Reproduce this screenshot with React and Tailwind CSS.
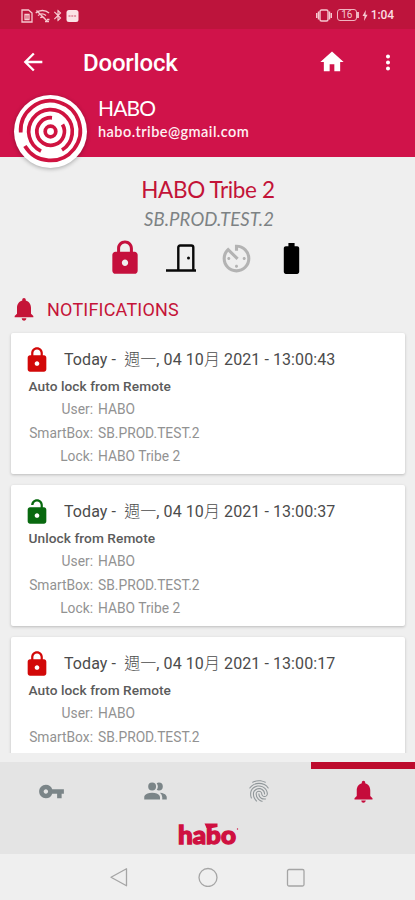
import {
  MdArrowBack,
  MdAvTimer,
  MdBatteryFull,
  MdBluetooth,
  MdFingerprint,
  MdHome,
  MdLock,
  MdMoreVert,
  MdNotifications,
  MdVpnKey,
} from 'react-icons/md';

const notifications = [
  {
    id: 1,
    locked: true,
    time: '13:00:43',
    title: 'Auto lock from Remote',
    details: [['User', 'HABO'], ['SmartBox', 'SB.PROD.TEST.2'], ['Lock', 'HABO Tribe 2']],
  },
  {
    id: 2,
    locked: false,
    time: '13:00:37',
    title: 'Unlock from Remote',
    details: [['User', 'HABO'], ['SmartBox', 'SB.PROD.TEST.2'], ['Lock', 'HABO Tribe 2']],
  },
  {
    id: 3,
    locked: true,
    time: '13:00:17',
    title: 'Auto lock from Remote',
    details: [['User', 'HABO'], ['SmartBox', 'SB.PROD.TEST.2']],
  },
];

function StatusBar() {
  return (
    <div className="flex h-[29px] items-center justify-between bg-[#bd143c] pr-[21px] pl-[21px] text-[#f6c9d0]">
      <div className="flex items-center gap-[2px] pt-[2px]">
        <svg width="12" height="14" viewBox="0 0 12 14" fill="none" stroke="currentColor" strokeWidth="1.3">
          <path d="M1 1h6.5L11 4v9H1zM4 5.5h4v5H4zM6 5v6" />
        </svg>
        <svg width="15" height="14" viewBox="0 0 15 14" fill="none" stroke="currentColor" strokeWidth="1.4">
          <path d="M.7 4c4-3.4 9.4-3.4 13.4 0M3 6.5c2.5-2 5.5-2 8 0M5.3 8.8c1.2-.9 2.8-.9 4 0M1.5 1.5l11 11" />
          <path d="M10 12.5h4M12 10.5h2.5" />
        </svg>
        <MdBluetooth className="-mx-[1px] h-[15px] w-[14px]" />
        <svg width="13" height="14" viewBox="0 0 13 14">
          <rect x=".5" y="1" width="12" height="12" rx="2.5" fill="#fbe3e6" />
          <path d="M2.5 7h8" stroke="#dd7f92" strokeWidth="1.3" strokeDasharray="2 .8" />
        </svg>
      </div>
      <div className="flex items-center pt-px">
        <svg width="16" height="13" viewBox="0 0 16 13" fill="none" stroke="currentColor" strokeWidth="1.4">
          <rect x="4" y="1" width="8" height="11" rx="1.5" />
          <path d="M2.5 2.5v8M13.5 2.5v8M.7 4v5M15.3 4v5" />
        </svg>
        <div className="ml-[5px] flex h-[12px] w-[20px] items-center justify-center rounded-[3px] border border-[#f0b5c0] font-[Roboto] text-[10px] leading-none">
          16
        </div>
        <div className="h-[6px] w-[2px] bg-[#f0b5c0]" />
        <svg className="ml-[3px]" width="6" height="11" viewBox="0 0 6 11" fill="currentColor">
          <path d="M3.8 0L.5 6h2L2 11l3.6-6.2H3.5z" />
        </svg>
        <span className="ml-[3px] font-[Roboto] text-[12px] font-medium tracking-[-0.1px] text-[#fbdde2]">1:04</span>
      </div>
    </div>
  );
}

function Avatar() {
  return (
    <div className="h-[73px] w-[73px] rounded-full bg-white shadow-[0_1px_4px_rgba(0,0,0,0.3)]">
      <svg width="73" height="73" viewBox="-36.5 -36.5 73 73" fill="none" stroke="#cf1340" strokeWidth="3.7">
        <circle r="5.3" />
        <path d="M1.5 -13.7A13.8 13.8 0 1 0 12 -7" />
        <path d="M11.5 18.5A21.8 21.8 0 1 0 -9.5 19.6" />
        <path d="M-29.8 1A29.8 29.8 0 1 1 -25.6 14.5" />
      </svg>
    </div>
  );
}

function Header() {
  return (
    <header className="h-[128px] bg-[#d0134a] text-white">
      <div className="flex h-[66px] items-center pr-[15px] pl-[19px]">
        <MdArrowBack className="h-[28px] w-[28px]" />
        <h1 className="ml-[36px] flex-1 pt-px font-[Roboto] text-[24px] font-medium tracking-[-0.2px]">Doorlock</h1>
        <MdHome className="mr-[30px] h-[28px] w-[28px]" />
        <MdMoreVert className="h-[29px] w-[24px]" />
      </div>
      <div className="flex pl-[14px]">
        <Avatar />
        <div className="ml-[11px] font-[Lato]">
          <p className="text-[21px] leading-[26px] tracking-[-0.9px]">HABO</p>
          <p className="text-[14.5px] leading-[22px] font-semibold tracking-[0.45px] text-[#fff0f2]">
            habo.tribe@gmail.com
          </p>
        </div>
      </div>
    </header>
  );
}

function DoorIcon() {
  return (
    <svg width="32" height="32" viewBox="0 0 32 32" fill="none" stroke="#080808" strokeWidth="2.4">
      <path d="M1 28.5h30M13.3 28V5.5q0-2 2-2h11q2 0 2 2V28" />
      <circle cx="23.5" cy="16" r="1.5" fill="#080808" stroke="none" />
    </svg>
  );
}

function LockOpenIcon({ className }) {
  return (
    <svg viewBox="0 0 24 24" fill="currentColor" className={className}>
      <path d="M18 8h-1V6c0-2.76-2.24-5-5-5S7 3.24 7 6h2c0-1.7 1.3-3.1 3-3.1s3.1 1.4 3.1 3.1v2H6c-1.1 0-2 .9-2 2v10c0 1.1.9 2 2 2h12c1.1 0 2-.9 2-2V10c0-1.1-.9-2-2-2zm-6 9c-1.1 0-2-.9-2-2s.9-2 2-2 2 .9 2 2-.9 2-2 2z" />
    </svg>
  );
}

function UsersIcon({ className }) {
  return (
    <svg viewBox="0 0 24 24" fill="currentColor" className={className}>
      <path d="M16 17v2H2v-2s0-4 7-4 7 4 7 4m-3.5-9.5A3.5 3.5 0 1 0 9 11a3.5 3.5 0 0 0 3.5-3.5m3.44 5.5A5.32 5.32 0 0 1 18 17v2h4v-2s0-3.63-6.06-4M15 4a3.39 3.39 0 0 0-1.93.59 5 5 0 0 1 0 5.82A3.39 3.39 0 0 0 15 11a3.5 3.5 0 0 0 0-7z" />
    </svg>
  );
}

function DeviceSummary() {
  return (
    <section className="flex flex-col items-center pt-[19px]">
      <h2 className="ml-px font-[Lato] text-[22.5px] leading-[28px] tracking-[-0.35px] text-[#c31338]">HABO Tribe 2</h2>
      <p className="mt-[3px] ml-[3px] font-[Lato] text-[18.5px] leading-[24px] tracking-[0.1px] text-[#7d8284] italic">
        SB.PROD.TEST.2
      </p>
      <div className="mt-[8px] ml-[2px] grid w-[222px] grid-cols-4 place-items-center">
        <MdLock className="h-[38px] w-[38px] text-[#c5103d]" />
        <DoorIcon />
        <MdAvTimer className="h-[37px] w-[37px] text-[#b3b3b3]" />
        <MdBatteryFull className="h-[37px] w-[37px] text-black" />
      </div>
    </section>
  );
}

function DetailRow({ label, value }) {
  return (
    <div className="flex h-[23.5px] items-center text-[13.8px] text-[#929292]">
      <span className="w-[82px] text-right">{label}:</span>
      <span className="ml-[5px]">{value}</span>
    </div>
  );
}

function NotificationCard({ notification }) {
  return (
    <article className="h-[141px] shrink-0 rounded-[2px] bg-white pt-[12px] font-[Roboto,'Noto_Sans_CJK_TC',sans-serif] shadow-[0_1px_3px_rgba(0,0,0,0.22)]">
      <div className="flex h-[29px] items-center pl-[12px]">
        {notification.locked ? (
          <MdLock className="h-[28px] w-[28px] text-[#d20808]" />
        ) : (
          <LockOpenIcon className="h-[28px] w-[28px] text-[#08690f]" />
        )}
        <p className="ml-[13px] pt-px text-[16px] tracking-[0.08px] whitespace-pre text-[#4b4b4b]">
          Today -{'  '}
          <span className="font-light">週一</span>, 04 10<span className="font-light">月</span> 2021 - {notification.time}
        </p>
      </div>
      <h3 className="h-[24px] pl-[17.5px] text-[13.7px] leading-[24px] font-medium tracking-[0.06px] text-[#5b5b5b]">
        {notification.title}
      </h3>
      {notification.details.map(([label, value]) => (
        <DetailRow key={label} label={label} value={value} />
      ))}
    </article>
  );
}

function HaboLogo() {
  return (
    <svg width="64" height="32" viewBox="0 0 64 32" fill="#cf1040">
      <text
        x="2"
        y="21.5"
        fontFamily="Lato"
        fontSize="25"
        fontWeight="900"
        stroke="#cf1040"
        strokeWidth="1.3"
        textLength="58"
        lengthAdjust="spacingAndGlyphs"
      >
        habo
      </text>
      <path d="M28.500 1.500h13v3.500l-5 1h-6z" />
      <circle cx="61.5" cy="7" r=".7" />
    </svg>
  );
}

function BottomTabs() {
  return (
    <nav className="h-[92px] bg-[#e4e4e4]">
      <div className="grid h-[58px] grid-cols-4 text-[#7b8588]">
        <div className="flex items-center justify-center">
          <MdVpnKey className="h-[27px] w-[27px]" />
        </div>
        <div className="flex items-center justify-center">
          <UsersIcon className="h-[27px] w-[27px]" />
        </div>
        <div className="flex items-center justify-center">
          <MdFingerprint className="h-[26px] w-[26px] text-[#90979a]" />
        </div>
        <div className="flex items-center justify-center border-t-[7px] border-[#bd0b2d] pb-[7px] text-[#c50b3b]">
          <MdNotifications className="h-[27px] w-[27px]" />
        </div>
      </div>
      <div className="flex justify-center pt-[2px]">
        <HaboLogo />
      </div>
    </nav>
  );
}

function SystemNav() {
  return (
    <div className="flex h-[46px] items-center justify-center gap-[68px] bg-[#efefef] text-[#a5a5a5]">
      <svg width="20" height="20" viewBox="0 0 20 20" fill="none" stroke="currentColor" strokeWidth="1.3" strokeLinejoin="round">
        <path d="M16.5 1.8v17L1 10.300z" />
      </svg>
      <svg width="20" height="20" viewBox="0 0 20 20" fill="none" stroke="currentColor" strokeWidth="1.3">
        <circle cx="10" cy="10.5" r="9" />
      </svg>
      <svg width="20" height="20" viewBox="0 0 20 20" fill="none" stroke="currentColor" strokeWidth="1.3">
        <rect x="1.5" y="2.5" width="16.5" height="16.5" rx="1.5" />
      </svg>
    </div>
  );
}

export default function App() {
  return (
    <div className="flex h-[900px] w-[415px] flex-col overflow-hidden bg-[#efefef]">
      <StatusBar />
      <Header />
      <DeviceSummary />
      <div className="mt-[18px] flex items-center pl-[10px] text-[#c51438]">
        <MdNotifications className="h-[28px] w-[28px]" />
        <h2 className="ml-[9px] pt-px font-[Roboto] text-[18px] tracking-[0.2px]">NOTIFICATIONS</h2>
      </div>
      <main className="mt-[6px] flex min-h-0 flex-1 flex-col gap-[11px] overflow-hidden pt-[4px] pr-[10px] pl-[11px]">
        {notifications.map((notification) => (
          <NotificationCard key={notification.id} notification={notification} />
        ))}
      </main>
      <div className="h-[9px] shrink-0" />
      <BottomTabs />
      <SystemNav />
    </div>
  );
}
